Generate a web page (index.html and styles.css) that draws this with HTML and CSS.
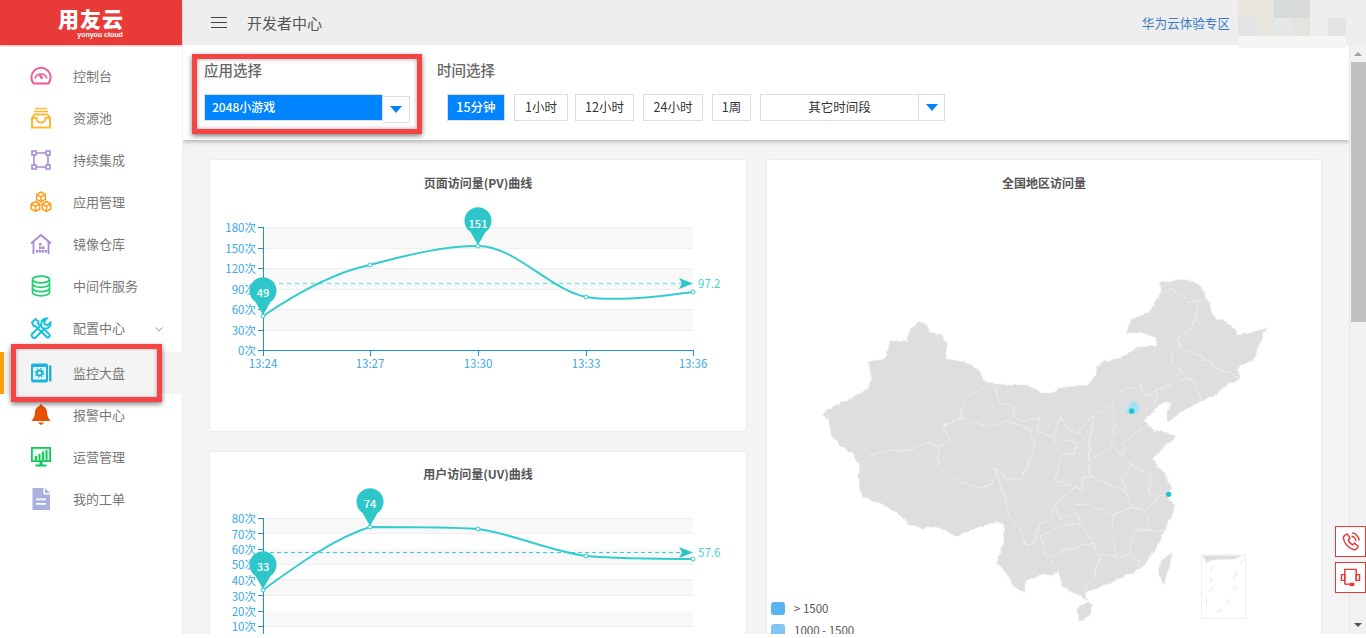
FILE: index.html
```html
<!DOCTYPE html>
<html>
<head>
  <meta charset="UTF-8">
  <title>开发者中心</title>
  <link rel="stylesheet" href="styles.css">
</head>
<body>
  <aside class="sidebar">
    <div class="logo">
      <span class="logo-name">用友云</span>
      <span class="logo-sub">yonyou cloud</span>
    </div>
    <ul class="menu">
      <li class="menu-item">
        <svg class="menu-icon" viewBox="0 0 22 22" fill="none" stroke="#ee5b92" stroke-width="2"><path d="M3.6 18.5h14.8a9.6 9.6 0 1 0-14.8 0z"/><path d="M5 13.500a6.300 6.300 0 0 1 12 0" stroke-width="1.500"/><path d="M9.500 10l3 3.600" stroke-width="2.500"/></svg>
        <span>控制台</span>
      </li>
      <li class="menu-item">
        <svg class="menu-icon" viewBox="0 0 22 22" fill="none" stroke="#fdb933" stroke-width="2"><path d="M5 1.500h12M4 4.500h14" stroke-width="1.400"/><path d="M4.500 7.500h13L20 11v9.500H2V11z"/><path d="M2 11h4.500a4.500 4.500 0 0 0 9 0H20"/></svg>
        <span>资源池</span>
      </li>
      <li class="menu-item">
        <svg class="menu-icon" viewBox="0 0 22 22" fill="none" stroke="#a78bdc" stroke-width="1.600"><rect x="2" y="2" width="4" height="4"/><rect x="16" y="2" width="4" height="4"/><rect x="2" y="16" width="4" height="4"/><rect x="16" y="16" width="4" height="4"/><path d="M6 4h10M6 18h10M4 6v10M18 6v10"/></svg>
        <span>持续集成</span>
      </li>
      <li class="menu-item">
        <svg class="menu-icon" viewBox="0 0 22 22" fill="none" stroke="#ff9d1e" stroke-width="1.500"><path d="M11 1l4.300 2.500v5L11 11 6.700 8.500v-5z"/><path d="M6.700 3.500L11 6l4.300-2.500M11 6v5"/><path d="M5.500 10.500l4.300 2.500v5l-4.300 2.500L1.200 18v-5zM1.200 13l4.300 2.500L9.800 13M5.500 15.500v5"/><path d="M16.500 10.500l4.300 2.500v5l-4.300 2.500-4.300-2.500v-5zM12.200 13l4.300 2.500 4.300-2.500M16.500 15.500v5"/></svg>
        <span>应用管理</span>
      </li>
      <li class="menu-item">
        <svg class="menu-icon" viewBox="0 0 22 22" fill="none" stroke="#a689d8" stroke-width="1.800"><path d="M1 10.500L11 2l10 8.500"/><path d="M3.500 9v12M18.500 9v12"/><path fill="#a689d8" stroke="none" d="M9 10h2.500v2.500H9zM9 13.500h2.500V16H9zM6 17h2.500v2.500H6zM9 17h2.500v2.500H9zM12 13.500h2.500V16H12zM12 17h2.500v2.500H12zM15 17h2v2.500h-2z"/></svg>
        <span>镜像仓库</span>
      </li>
      <li class="menu-item">
        <svg class="menu-icon" viewBox="0 0 22 22" fill="none" stroke="#1dd06e" stroke-width="1.700"><ellipse cx="11" cy="4.500" rx="8.500" ry="3.300"/><path d="M2.500 4.500v13c0 1.800 3.800 3.300 8.500 3.300s8.500-1.500 8.500-3.300v-13"/><path d="M2.500 9c0 1.800 3.800 3.300 8.500 3.300s8.500-1.500 8.500-3.300M2.500 13.300c0 1.800 3.800 3.300 8.500 3.300s8.500-1.500 8.500-3.300"/></svg>
        <span>中间件服务</span>
      </li>
      <li class="menu-item">
        <svg class="menu-icon" viewBox="0 0 22 22" fill="none" stroke="#19c0dc" stroke-width="2"><path d="M2 5.500L5.500 2l3 2.500-.5 2L19.500 17.500a2 2 0 0 1-2.500 2.800L5.500 9l-1.500.3z"/><path d="M20.500 5.500l-3 2.700-2.800-1-.7-2.700L16.800 1.500a5 5 0 0 0-5.300 6.300L2.500 16.500a2.500 2.500 0 0 0 3.500 3.700l8.800-8.800a5 5 0 0 0 5.700-5.900z"/></svg>
        <span>配置中心</span>
        <svg class="chevron" viewBox="0 0 8 5" fill="none" stroke="#999" stroke-width="1"><path d="M.5.500L4 4 7.500.500"/></svg>
      </li>
      <li class="menu-item is-active">
        <svg class="menu-icon" viewBox="0 0 22 22"><path fill="#1cb4dc" d="M3 1.500h13a2 2 0 0 1 2 2v15a2 2 0 0 1-2 2H3a2 2 0 0 1-2-2v-15a2 2 0 0 1 2-2z"/><path fill="#1cb4dc" d="M19 3.500h1.500a1 1 0 0 1 1 1v14a1 1 0 0 1-1 1H19z"/><path fill="#e8f7fb" d="M3 5h13v12.500H3z"/><circle cx="9.500" cy="11" r="2.600" fill="none" stroke="#1cb4dc" stroke-width="2"/><circle cx="9.500" cy="11" r="4.300" fill="none" stroke="#1cb4dc" stroke-width="1.300" stroke-dasharray="1.500 1.900"/></svg>
        <span>监控大盘</span>
      </li>
      <li class="menu-item">
        <svg class="menu-icon" viewBox="0 0 22 22"><path fill="#e65100" d="M11 .5c1 0 1.500.7 1.600 1.600 3 .9 4.400 3.600 4.500 6.900.1 3 1.600 6 3.400 8H1.500c1.800-2 3.300-5 3.400-8C5 5.700 6.400 3 9.400 2.100 9.500 1.200 10 .5 11 .5z"/><path fill="#e65100" d="M7.500 18.500h7L11 21z"/></svg>
        <span>报警中心</span>
      </li>
      <li class="menu-item">
        <svg class="menu-icon" viewBox="0 0 22 22"><path fill="#0ecb5c" d="M1 1h20v15H1z"/><path fill="#e9faef" d="M2.800 2.800h16.400v11.400H2.800z"/><path fill="#0ecb5c" d="M5 10h2v4H5zM8.500 8h2v6h-2zM12 5.500h2V14h-2zM15.500 4h2v10h-2zM9.500 16h3v2.500h-3zM5.500 18.500h11V20.500h-11z"/></svg>
        <span>运营管理</span>
      </li>
      <li class="menu-item">
        <svg class="menu-icon" viewBox="0 0 22 22"><path fill="#a8b0e0" d="M2.500 0h11v6.500H20V22H2.500z"/><path fill="#a8b0e0" d="M15 0l5 5h-5z"/><path fill="#fff" d="M6 10.500h10v1.800H6zM6 15h10v1.800H6z"/></svg>
        <span>我的工单</span>
      </li>
    </ul>
  </aside>

  <div class="main">
    <header class="topbar">
      <div class="hamburger"><i></i><i></i><i></i></div>
      <h1 class="page-title">开发者中心</h1>
      <a class="topbar-link">华为云体验专区</a>
      <div class="user-blur">
        <i class="c1"></i><i class="c2"></i><i class="c3"></i><i class="c4"></i><i></i><i></i>
        <i class="c5"></i><i class="c2"></i><i class="c6"></i><i class="c7"></i><i></i><i class="c5"></i>
      </div>
    </header>

    <div class="workspace">
      <div class="content">
        <section class="filters">
          <div class="filter-app">
            <div class="filter-title">应用选择</div>
            <div class="select-row">
              <div class="select-value">2048小游戏</div>
              <div class="select-arrow"><i class="caret"></i></div>
            </div>
          </div>
          <div class="filter-time">
            <div class="filter-title">时间选择</div>
            <div class="time-row">
              <button class="time-btn is-on w58">15分钟</button>
              <button class="time-btn w54">1小时</button>
              <button class="time-btn w59 tight">12小时</button>
              <button class="time-btn w60">24小时</button>
              <button class="time-btn w39">1周</button>
              <div class="time-other">
                <span class="time-other-label">其它时间段</span>
                <span class="time-other-arrow"><i class="caret"></i></span>
              </div>
            </div>
          </div>
        </section>

        <div class="board">
          <div class="board-left">
            <div class="card chart-card">
              <svg class="chart" viewBox="210 160 536 271">
                <text class="chart-title" x="478" y="188">页面访问量(PV)曲线</text>
                <path class="band" d="M263 227h430v21H263zM263 268h430v21H263zM263 309h430v21H263z"/>
                <path class="grid" d="M263 227.500h430M263 248.500h430M263 268.500h430M263 289.500h430M263 309.500h430M263 330.500h430"/>
                <path class="axis" d="M263.500 227v124M263 350.500h431M258 227.500h5M258 248.500h5M258 268.500h5M258 289.500h5M258 309.500h5M258 330.500h5M258 350.500h5M263.500 351v5M370.500 351v5M478.500 351v5M586.500 351v5M693.500 351v5"/>
                <g class="y-labels">
                  <text x="256" y="232">180次</text><text x="256" y="253">150次</text><text x="256" y="273">120次</text><text x="256" y="294">90次</text><text x="256" y="314">60次</text><text x="256" y="335">30次</text><text x="256" y="355">0次</text>
                </g>
                <g class="x-labels">
                  <text x="263" y="368">13:24</text><text x="370" y="368">13:27</text><text x="478" y="368">13:30</text><text x="586" y="368">13:33</text><text x="693" y="368">13:36</text>
                </g>
                <path class="avg" d="M263 283.500h420"/>
                <path class="avg-arrow" d="M679 278l14 5.500-14 5.500 3-5.500z"/>
                <text class="avg-label" x="698" y="288">97.2</text>
                <path class="curve" d="M263 316C300 291 335 272 370 265 410 254 445 246 478 246 515 246 550 290 586 297 610 301 650 298 693 292"/>
                <g class="dots"><circle cx="263" cy="316" r="2"/><circle cx="370" cy="265" r="2"/><circle cx="478" cy="246" r="2"/><circle cx="586" cy="297" r="2"/><circle cx="693" cy="292" r="2"/></g>
                <path class="pin" d="M263 315l-7.500-13a13.500 13.500 0 1 1 15 0z"/>
                <text class="pin-label" x="263" y="297">49</text>
                <path class="pin" d="M478 245l-7.500-13a13.500 13.500 0 1 1 15 0z"/>
                <text class="pin-label" x="478" y="228">151</text>
              </svg>
            </div>
            <div class="card chart-card">
              <svg class="chart" viewBox="210 452 536 271">
                <text class="chart-title" x="478" y="479">用户访问量(UV)曲线</text>
                <path class="band" d="M263 518h430v15H263zM263 549h430v15H263zM263 580h430v15H263zM263 611h430v15H263z"/>
                <path class="grid" d="M263 518.500h430M263 533.500h430M263 564.500h430M263 579.500h430M263 595.500h430M263 626.500h430"/>
                <path class="axis" d="M263.500 518v120M258 518.500h5M258 533.500h5M258 549.500h5M258 564.500h5M258 580.500h5M258 595.500h5M258 611.500h5M258 626.500h5"/>
                <g class="y-labels">
                  <text x="256" y="523">80次</text><text x="256" y="539">70次</text><text x="256" y="554">60次</text><text x="256" y="569">50次</text><text x="256" y="585">40次</text><text x="256" y="601">30次</text><text x="256" y="616">20次</text><text x="256" y="631">10次</text>
                </g>
                <path class="avg strong" d="M263 552.500h420"/>
                <path class="avg-arrow" d="M679 547l14 5.500-14 5.500 3-5.500z"/>
                <text class="avg-label" x="698" y="557">57.6</text>
                <path class="curve" d="M263 590C300 563 335 538 370 527 400 527 450 527 478 529 510 533 550 551 586 556 620 559 660 559 693 559"/>
                <g class="dots"><circle cx="263" cy="590" r="2"/><circle cx="370" cy="527" r="2"/><circle cx="478" cy="529" r="2"/><circle cx="586" cy="556" r="2"/><circle cx="693" cy="559" r="2"/></g>
                <path class="pin" d="M263 589l-7.500-13a13.500 13.500 0 1 1 15 0z"/>
                <text class="pin-label" x="263" y="571">33</text>
                <path class="pin" d="M370 526l-7.500-13a13.500 13.500 0 1 1 15 0z"/>
                <text class="pin-label" x="370" y="508">74</text>
              </svg>
            </div>
          </div>

          <div class="card map-card">
            <h3 class="map-title">全国地区访问量</h3>
            <svg class="map" viewBox="0 0 1410 1104">
              <defs>
                <filter id="rough" x="-5%" y="-5%" width="110%" height="110%">
                  <feTurbulence type="fractalNoise" baseFrequency="0.045" numOctaves="2" seed="4"/>
                  <feDisplacementMap in="SourceGraphic" scale="14" xChannelSelector="R" yChannelSelector="G"/>
                </filter>
              </defs>
              <g filter="url(#rough)">
                <path class="land" d="M38 435L50 420 80 405 105 395 140 372 178 352 185 325 175 278 225 265 240 212 290 215 300 178 325 158 345 155 360 185 395 195 415 225 408 265 470 278 505 298 530 340 600 345 650 345 690 365 712 372 760 352 830 345 860 318 860 290 885 272 930 265 980 235 1040 225 1030 200 990 185 950 190 960 150 1020 125 1050 70 1050 40 1090 30 1130 28 1170 45 1195 90 1210 140 1260 160 1285 195 1330 185 1370 175 1345 230 1330 270 1290 285 1285 330 1255 340 1220 375 1170 395 1120 420 1075 455 1070 430 1085 400 1060 395 1030 425 1000 455 1030 480 1060 485 1100 495 1090 510 1060 530 1030 570 1060 610 1085 650 1075 680 1095 710 1085 740 1060 790 1030 850 990 900 950 915 900 940 850 960 825 965 830 990 800 975 760 950 745 910 700 915 650 930 645 965 610 950 595 915 560 880 580 820 585 760 555 755 500 775 440 800 380 770 340 775 300 765 270 735 210 700 155 680 145 635 150 590 130 550 95 530 65 500 55 450z"/>
                <path class="land" d="M800 1020L830 995 850 1005 835 1040 810 1052z"/>
                <path class="land" d="M1055 870L1085 848 1085 880 1060 945 1045 900z"/>
                <path class="border" d="M150 585L180 555 230 545 300 540 350 520 385 530 420 510 400 465 450 445 455 405 490 370 530 345"/>
                <path class="border" d="M400 465L450 445 540 470 590 450 660 480 675 530 650 590 630 630 590 625 555 595 550 640 510 655 430 625 385 590 385 530"/>
                <path class="border" d="M550 345L570 400 610 410 610 440 650 455 690 440 685 485 730 500 750 440 780 480 800 490 850 435 910 400 920 365 990 345 1010 380 1040 360 1130 325 1090 280 1085 250 1115 230 1100 210 1150 165 1170 90 1135 95 1090 60 1050 70"/>
                <path class="border" d="M1115 235L1190 270 1230 300 1285 320M1130 325L1160 340 1170 390M1010 420L1040 390 1040 360"/>
                <path class="border" d="M730 500L750 550 795 555 800 520 760 505M800 490L835 510 835 570 845 620 820 620 815 660 790 650 735 630 750 570 750 550"/>
                <path class="border" d="M850 435L835 570M910 400L915 470 905 520 940 560 965 585M835 575L905 530M940 560L940 520 1000 470"/>
                <path class="border" d="M845 620L860 630 950 665 935 620 965 585 1015 610 1025 630 1015 670 1060 680M950 665L965 710 1005 720 1050 680"/>
                <path class="border" d="M800 700L840 705 910 735 965 710M555 595L590 700 600 745 625 770 650 825 670 820 690 760 725 750 735 700 790 655M735 700L750 745 800 730 810 760"/>
                <path class="border" d="M690 800L710 860 770 840 820 825 855 820 810 760 740 775 690 800M910 735L905 780 920 860 860 850 855 820M1005 720L1020 780 975 780 955 855 920 865M1020 780L1060 785"/>
                <path class="border" d="M710 860L740 890 745 910M860 850L870 860 850 920 825 960M955 855L980 870 990 900"/>
              </g>
              <path class="beijing" d="M970 392L985 402 988 420 975 432 948 430 952 412z"/>
              <circle class="map-dot" cx="965" cy="423" r="8"/>
              <circle class="map-dot" cx="1076" cy="673" r="8"/>
              <rect class="inset" x="1175" y="855" width="132" height="190"/>
              <path class="land" d="M1178 857H1296L1270 868Q1205 866 1190 878z"/>
              <path class="inset-dash" d="M1300 865L1290 885M1280 905L1270 930M1210 885L1200 905M1200 920L1205 935M1210 950L1198 965M1280 945L1270 960M1262 985L1250 1005M1190 985L1190 1000M1235 1020L1220 1026"/>
            </svg>
            <div class="legend">
              <div class="legend-row"><i class="swatch s1"></i>&gt; 1500</div>
              <div class="legend-row"><i class="swatch s2"></i>1000 - 1500</div>
            </div>
          </div>
        </div>
      </div>

      <div class="scrollbar">
        <i class="scroll-up"></i>
        <div class="scroll-thumb"></div>
        <i class="scroll-down"></i>
      </div>
    </div>
  </div>

  <div class="mark mark-app"></div>
  <div class="mark mark-menu"></div>

  <div class="side-tools">
    <a class="side-tool">
      <svg viewBox="0 0 22 22" fill="none" stroke="#e53935" stroke-width="1.500"><path d="M5 4.500l2.500-1.500 3 4.500-1.800 1.700c.6 2.200 2.400 4.300 4.600 5.300l1.800-1.700 4 3.300-1.600 2.500c-1 1.200-3 1.200-5 .2-4-1.800-7.800-6.200-8.800-10.500-.4-1.500 0-3 1.300-3.800z"/><path d="M12 5.500a5 5 0 0 1 4.500 5M12.500 2a8.500 8.500 0 0 1 7.500 8"/></svg>
    </a>
    <a class="side-tool">
      <svg viewBox="0 0 22 22" fill="none" stroke="#e53935" stroke-width="1.500"><path d="M5 18V2.500h12V15"/><path d="M5 18h5"/><path d="M1.500 8h3.500v6H1.500zM17 8h3.500v6H17z"/><path fill="#e53935" stroke="none" d="M10 16.500h5V20h-5z"/></svg>
    </a>
  </div>
</body>
</html>
```

FILE: styles.css
```css
* {
  box-sizing: border-box;
}
html {
  background: #fff;
}
body {
  margin: 0;
  height: 634px;
  display: flex;
  overflow: hidden;
  background: #f4f4f4;
  font-family: "Noto Sans CJK SC", "Liberation Sans", sans-serif;
  color: #666;
}

/* sidebar */
.sidebar {
  width: 183px;
  flex: none;
  background: #fff;
  border-right: 1px solid #eee;
}
.logo {
  height: 45px;
  background: #e83a37;
  color: #fff;
  display: flex;
  flex-direction: column;
  align-items: center;
  padding: 6px 0 0 0;
  box-shadow: 0 1px 2px rgba(232, 58, 55, 0.4);
}
.logo-name {
  font-size: 21px;
  line-height: 25px;
  font-weight: 900;
  letter-spacing: 1px;
}
.logo-sub {
  font-size: 7px;
  line-height: 7px;
  font-weight: 700;
  font-family: "Liberation Sans", sans-serif;
  margin-left: 18px;
}
.menu {
  list-style: none;
  margin: 0;
  padding: 10px 0 0 0;
}
.menu-item {
  height: 42px;
  display: flex;
  align-items: center;
  padding-left: 30px;
  font-size: 13px;
  color: #777;
  position: relative;
}
.menu-item span {
  margin-bottom: 2px;
}
.menu-icon {
  width: 22px;
  height: 22px;
  margin-right: 21px;
  flex: none;
}
.chevron {
  width: 8px;
  height: 5px;
  position: absolute;
  left: 155px;
  top: 20px;
}
.menu-item.is-active {
  margin-top: 3px;
  background: #f4f4f4;
  border-left: 4px solid #ff9e00;
  padding-left: 26px;
}

/* top bar */
.main {
  flex: 1;
  min-width: 0;
  display: flex;
  flex-direction: column;
}
.topbar {
  height: 45px;
  flex: none;
  background: #eee;
  display: flex;
  align-items: center;
  padding-left: 28px;
  position: relative;
}
.hamburger {
  width: 16px;
  display: flex;
  flex-direction: column;
  gap: 4px;
  margin-right: 20px;
}
.hamburger i {
  display: block;
  height: 1px;
  background: #444;
}
.page-title {
  margin: 0;
  font-size: 15px;
  font-weight: 400;
  color: #555;
}
.topbar-link {
  margin-left: auto;
  margin-right: 136px;
  font-size: 12.6px;
  color: #3b7cc4;
}
.user-blur {
  position: absolute;
  left: 1055px;
  top: 0;
  width: 108px;
  height: 48px;
  background: #f5f5f5;
  display: grid;
  grid-template-columns: repeat(6, 18px);
  grid-auto-rows: 18px;
  z-index: 2;
}
.user-blur i { background: #eee; }
.user-blur .c1 { background: #e8e4de; }
.user-blur .c2 { background: #e8e5de; }
.user-blur .c3 { background: #d6dada; }
.user-blur .c4 { background: #d7dad8; }
.user-blur .c5 { background: #e2e3e5; }
.user-blur .c6 { background: #e6e8e8; }
.user-blur .c7 { background: #e5e3de; }

/* content area */
.workspace {
  flex: 1;
  min-height: 0;
  display: flex;
}
.content {
  flex: 1;
  min-width: 0;
  overflow: hidden;
}
.scrollbar {
  width: 17px;
  flex: none;
  background: #f1f1f1;
  padding: 0 0 0 1px;
  position: relative;
  border-left: 1px solid #e8e8e8;
}
.scroll-thumb {
  width: 15px;
  height: 260px;
  margin-top: 17px;
  background: #c1c1c1;
}
.scroll-up, .scroll-down {
  position: absolute;
  left: 4px;
  width: 0;
  height: 0;
  border-left: 4px solid transparent;
  border-right: 4px solid transparent;
}
.scroll-up {
  top: 7px;
  border-bottom: 4px solid #a3a3a3;
}
.scroll-down {
  bottom: 7px;
  border-top: 4px solid #505050;
}

/* filters */
.filters {
  height: 95px;
  background: #fff;
  display: flex;
  padding: 15px 0 0 21px;
  box-shadow: 0 2px 4px rgba(0, 0, 0, 0.25);
  position: relative;
}
.filter-app {
  width: 233px;
}
.filter-title {
  font-size: 14.5px;
  line-height: 20px;
  font-weight: 500;
  color: #666;
  margin-bottom: 14px;
}
.select-row {
  display: flex;
  align-items: flex-start;
}
.select-value {
  width: 179px;
  height: 27px;
  background: #0084ff;
  border: 1px solid #ddd;
  color: #fff;
  font-size: 12px;
  font-weight: 500;
  line-height: 24px;
  padding-left: 7px;
}
.select-arrow {
  width: 27px;
  height: 27px;
  margin-top: 2px;
  background: #fff;
  border: 1px solid #ddd;
  border-left: none;
  display: flex;
  align-items: center;
  justify-content: center;
}
.caret {
  display: block;
  width: 0;
  height: 0;
  border-left: 6px solid transparent;
  border-right: 6px solid transparent;
  border-top: 7px solid #0084ff;
}
.time-row {
  display: flex;
  gap: 9px;
  margin-left: 10px;
}
.time-btn {
  height: 27px;
  padding: 0 0 2px 0;
  background: #fff;
  border: 1px solid #ddd;
  font: inherit;
  font-size: 12.5px;
  color: #333;
}
.time-btn.is-on {
  background: #0084ff;
  color: #fff;
  font-weight: 500;
}
.time-btn.tight { margin-left: -2px; }
.w39 { width: 39px; }
.w54 { width: 54px; }
.w58 { width: 58px; }
.w59 { width: 59px; }
.w60 { width: 60px; }
.time-other {
  width: 185px;
  height: 27px;
  background: #fff;
  border: 1px solid #ddd;
  display: flex;
  font-size: 12.5px;
  color: #333;
}
.time-other-label {
  flex: 1;
  text-align: center;
  line-height: 23px;
}
.time-other-arrow {
  width: 26px;
  border-left: 1px solid #ddd;
  display: flex;
  align-items: center;
  justify-content: center;
}

/* cards */
.board {
  display: grid;
  grid-template-columns: 538px 556px;
  gap: 19px;
  padding: 19px 0 0 26px;
}
.board-left {
  display: flex;
  flex-direction: column;
  gap: 19px;
}
.card {
  background: #fff;
  border: 1px solid #ececec;
  border-radius: 3px;
}
.chart-card {
  height: 273px;
  flex: none;
}
.chart {
  display: block;
  width: 536px;
  height: 271px;
  overflow: visible;
  font-family: "Noto Sans CJK SC", "Liberation Sans", sans-serif;
}
.chart-title {
  font-size: 12px;
  font-weight: 700;
  fill: #555;
  text-anchor: middle;
}
.band { fill: #f8f8f8; }
.grid {
  fill: none;
  stroke: #efefef;
}
.axis {
  fill: none;
  stroke: #1a94d6;
}
.y-labels text {
  font-size: 11.5px;
  fill: #3ba7e5;
  text-anchor: end;
}
.x-labels text {
  font-size: 11.5px;
  fill: #3ba7e5;
  text-anchor: middle;
}
.avg {
  fill: none;
  stroke: #7fe3e3;
  stroke-width: 1.3;
  stroke-dasharray: 4 4;
}
.avg.strong {
  stroke: #2fd3d8;
  stroke-width: 1;
  stroke-dasharray: 4 3;
}
.avg-arrow { fill: #2ec7c9; }
.avg-label {
  font-size: 11.5px;
  fill: #4fd2d6;
}
.curve {
  fill: none;
  stroke: #33cccf;
  stroke-width: 2;
}
.dots circle {
  fill: #fff;
  stroke: #33cccf;
}
.pin { fill: #2ec7c9; }
.pin-label {
  font-size: 11px;
  font-weight: 500;
  fill: #fff;
  text-anchor: middle;
}

/* map */
.map-card {
  position: relative;
  height: 560px;
}
.map-title {
  margin: 0;
  padding-top: 15px;
  font-size: 12px;
  line-height: 16px;
  font-weight: 700;
  color: #555;
  text-align: center;
}
.map {
  display: block;
  width: 470px;
  height: 368px;
  margin: 79px 0 0 43px;
}
.land {
  fill: #dedede;
  stroke: #ececec;
  stroke-width: 1.5;
}
.border {
  fill: none;
  stroke: #f0f0f0;
  stroke-width: 2.5;
}
.beijing { fill: #a6e0f7; }
.map-dot { fill: #1cc6cf; }
.inset {
  fill: #fff;
  stroke: #e8e8e8;
  stroke-width: 2;
}
.inset-dash {
  fill: none;
  stroke: #e6e6e6;
  stroke-width: 3;
}
.legend {
  position: absolute;
  left: 4px;
  top: 437px;
  font-size: 11.5px;
  color: #555;
}
.legend-row {
  height: 22px;
  display: flex;
  align-items: center;
}
.swatch {
  width: 14px;
  height: 13px;
  border-radius: 3px;
  margin-right: 9px;
}
.s1 { background: #59b4f0; }
.s2 { background: #7fc6f5; }

/* red annotation boxes */
.mark {
  position: absolute;
  border: 5px solid #f44545;
  box-shadow: 0 2px 5px rgba(0, 0, 0, 0.5), inset 0 0 4px rgba(0, 0, 0, 0.35);
}
.mark-app {
  left: 192px;
  top: 54px;
  width: 230px;
  height: 80px;
}
.mark-menu {
  left: 11px;
  top: 344px;
  width: 151px;
  height: 58px;
}

/* floating buttons */
.side-tools {
  position: fixed;
  right: 0;
  top: 526px;
  display: flex;
  flex-direction: column;
  gap: 5px;
}
.side-tool {
  width: 31px;
  height: 31px;
  background: #fff;
  border: 1px solid #e53935;
  display: flex;
  align-items: center;
  justify-content: center;
}
.side-tool svg {
  width: 21px;
  height: 21px;
}
```
